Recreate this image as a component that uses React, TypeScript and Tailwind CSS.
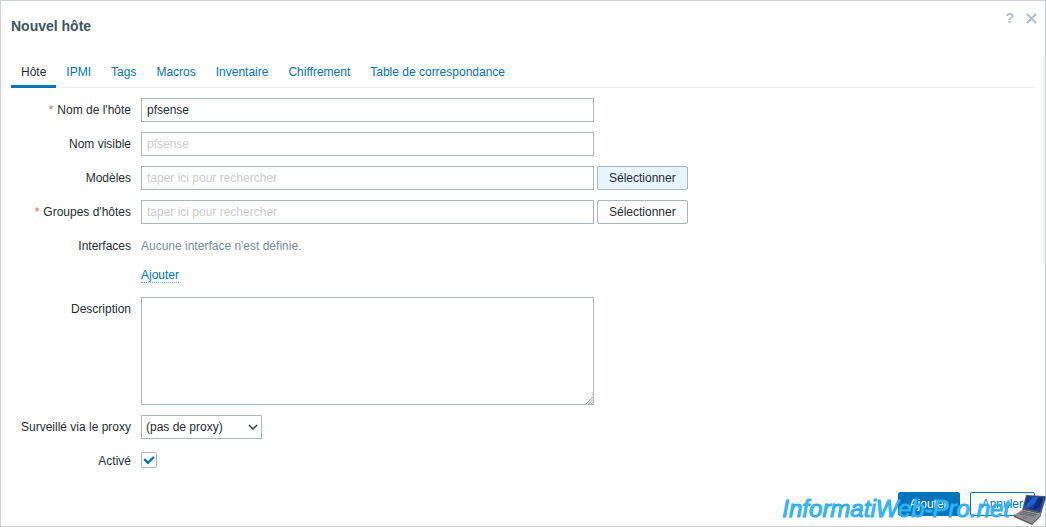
import { useState } from "react";
import type { ReactNode } from "react";

const tabs = ["Hôte", "IPMI", "Tags", "Macros", "Inventaire", "Chiffrement", "Table de correspondance"];

const fieldClass =
  "block h-6 w-full max-w-[453px] min-w-0 border border-[#acb6bd] bg-white px-[5px] text-[#1f2c33] outline-none placeholder:text-[#cccccc]";

type RowProps = {
  label: string;
  htmlFor?: string;
  required?: boolean;
  children: ReactNode;
};

function FormRow({ label, htmlFor, required, children }: RowProps) {
  return (
    <div className="flex items-start gap-2.5">
      <label htmlFor={htmlFor} className="w-[120px] shrink-0 text-right leading-6">
        {required && <span className="mr-1 text-[#e45959]">*</span>}
        {label}
      </label>
      <div className="min-w-0 flex-1">{children}</div>
    </div>
  );
}

function SearchField({ id, active }: { id: string; active?: boolean }) {
  return (
    <div className="flex gap-[3px]">
      <input id={id} type="text" placeholder="taper ici pour rechercher" className={fieldClass} />
      <button
        type="button"
        className={`h-6 shrink-0 rounded-xs border border-[#acb6bd] px-[11px] ${active ? "bg-[#e8f4ff]" : "bg-white"}`}
      >
        Sélectionner
      </button>
    </div>
  );
}

function Watermark() {
  return (
    <div className="pointer-events-none absolute -right-px bottom-0 flex items-end">
      <span className="pb-[3px] text-2xl leading-7 text-[#3ac0fa] italic [-webkit-text-stroke:1px_#2aaaf4]">
        InformatiWeb-Pro.net
      </span>
      <svg width="32" height="32" viewBox="0 0 32 32" className="ml-1" aria-hidden="true">
        <path d="M12 1 L31 2 Q32 2 32 4 L27 20 L8 16 Z" fill="#565b60" />
        <path d="M13 2 L30 3 L26 18 L10 14 Z" fill="#123c9c" />
        <path d="M19 3 L24 3 L20 10 L14 14 L10 14 Z" fill="#2460c4" />
        <path d="M25 4 L29 5 L25 13 L18 16 Z" fill="#0a2878" />
        <path d="M8 16 L27 20 L18 29 L0 21 Z" fill="#8b8d90" />
        <path d="M9 17 L23 20 L19 23 L5 20 Z" fill="#5b5e63" />
        <path d="M8 18 L21 21 M7 19 L20 23" stroke="#85888c" strokeWidth="1" />
        <path d="M9 23 L13 23 L12 25 L8 24 Z" fill="#76797e" />
        <path d="M0 21 L18 29 L27 20 L27 22 L18 31 L0 23 Z" fill="#5d6065" />
      </svg>
    </div>
  );
}

export default function App() {
  const [activeTab, setActiveTab] = useState("Hôte");
  const [name, setName] = useState("pfsense");
  const [enabled, setEnabled] = useState(true);

  return (
    <div
      role="dialog"
      aria-labelledby="dialog-title"
      className="relative flex min-h-screen flex-col border border-[#ccd1d4] bg-white p-2.5 text-xs text-[#1f2c33] [font-family:'Liberation_Sans',Arial,sans-serif]"
    >
      <header className="flex h-[46px] items-start justify-between">
        <h1 id="dialog-title" className="pt-[5px] text-sm font-bold text-[#3c5563]">
          Nouvel hôte
        </h1>
        <div className="-mr-1 flex h-3.5 items-center gap-2.5 text-[#b4bec4]">
          <a href="#aide" aria-label="Aide" className="text-sm leading-4 font-bold">
            ?
          </a>
          <button type="button" aria-label="Fermer" className="p-0.5">
            <svg width="11" height="11" viewBox="0 0 11 11" fill="none" stroke="currentColor" strokeWidth="2">
              <path d="M1 1 L10 10 M10 1 L1 10" />
            </svg>
          </button>
        </div>
      </header>

      <nav className="flex border-b border-[#ebeef0]" role="tablist">
        {tabs.map((tab) => (
          <button
            key={tab}
            type="button"
            role="tab"
            aria-selected={tab === activeTab}
            onClick={() => setActiveTab(tab)}
            className={`-mb-px h-[31px] border-b-[3px] px-2.5 pt-0.5 ${
              tab === activeTab ? "border-[#0275b8] text-[#1f2c33]" : "border-transparent text-[#0275b8]"
            }`}
          >
            {tab}
          </button>
        ))}
      </nav>

      <form className="flex flex-1 flex-col" onSubmit={(e) => e.preventDefault()}>
        <div className="flex flex-col gap-2.5 pt-2.5">
          <FormRow label="Nom de l'hôte" htmlFor="host" required>
            <input id="host" type="text" value={name} onChange={(e) => setName(e.target.value)} className={fieldClass} />
          </FormRow>
          <FormRow label="Nom visible" htmlFor="visible-name">
            <input id="visible-name" type="text" placeholder={name} className={fieldClass} />
          </FormRow>
          <FormRow label="Modèles" htmlFor="templates">
            <SearchField id="templates" active />
          </FormRow>
          <FormRow label="Groupes d'hôtes" htmlFor="groups" required>
            <SearchField id="groups" />
          </FormRow>
          <FormRow label="Interfaces">
            <p className="leading-6 text-[#768d99]">Aucune interface n'est définie.</p>
            <div className="flex pt-2.5 pb-1">
              <button type="button" className="border-b border-dotted border-[#0275b8]/60 leading-[14px] text-[#0275b8]">
                Ajouter
              </button>
            </div>
          </FormRow>
          <FormRow label="Description" htmlFor="description">
            <div className="relative max-w-[453px]">
              <textarea
                id="description"
                className="block h-[108px] w-full resize-none border border-[#acb6bd] p-[5px] outline-none"
              />
              <svg
                width="7"
                height="7"
                viewBox="0 0 7 7"
                fill="none"
                stroke="#a0a6aa"
                className="pointer-events-none absolute right-px bottom-px"
              >
                <path d="M0 7 L7 0 M2.5 7 L7 2.5 M5 7 L7 5" />
              </svg>
            </div>
          </FormRow>
          <FormRow label="Surveillé via le proxy" htmlFor="proxy">
            <div className="relative w-[121px]">
              <select id="proxy" className="block h-6 w-full appearance-none border border-[#acb6bd] bg-white px-1 outline-none">
                <option>(pas de proxy)</option>
              </select>
              <svg
                width="10"
                height="6"
                viewBox="0 0 10 6"
                fill="none"
                stroke="#2a3338"
                strokeWidth="1.3"
                className="pointer-events-none absolute top-[9px] right-1"
              >
                <path d="M1 1 L5 5 L9 1" />
              </svg>
            </div>
          </FormRow>
          <FormRow label="Activé" htmlFor="enabled">
            <div className="flex h-[22px] items-center">
              <span className="relative block size-4">
                <input
                  id="enabled"
                  type="checkbox"
                  checked={enabled}
                  onChange={(e) => setEnabled(e.target.checked)}
                  className="block size-4 appearance-none rounded-xs border border-[#acb6bd] bg-white"
                />
                {enabled && (
                  <svg viewBox="0 0 16 16" fill="none" stroke="#0275b8" strokeWidth="2.4" className="pointer-events-none absolute inset-0">
                    <path d="M3.2 7.2 L7 10.8 L12.8 5" />
                  </svg>
                )}
              </span>
            </div>
          </FormRow>
        </div>

        <footer className="mt-auto flex justify-end gap-2.5 pt-[19px]">
          <button type="submit" className="h-6 rounded-xs border border-[#0275b8] bg-[#0275b8] px-[11px] text-white">
            Ajouter
          </button>
          <button type="button" className="h-6 rounded-xs border border-[#0275b8] bg-white px-[11px] text-[#0275b8]">
            Annuler
          </button>
        </footer>
      </form>

      {/* scroll thumb */}
      <div className="pointer-events-none absolute top-[55px] right-0 h-[208px] w-0.5 border-l border-[#e3e8eb]" />

      <Watermark />
    </div>
  );
}
